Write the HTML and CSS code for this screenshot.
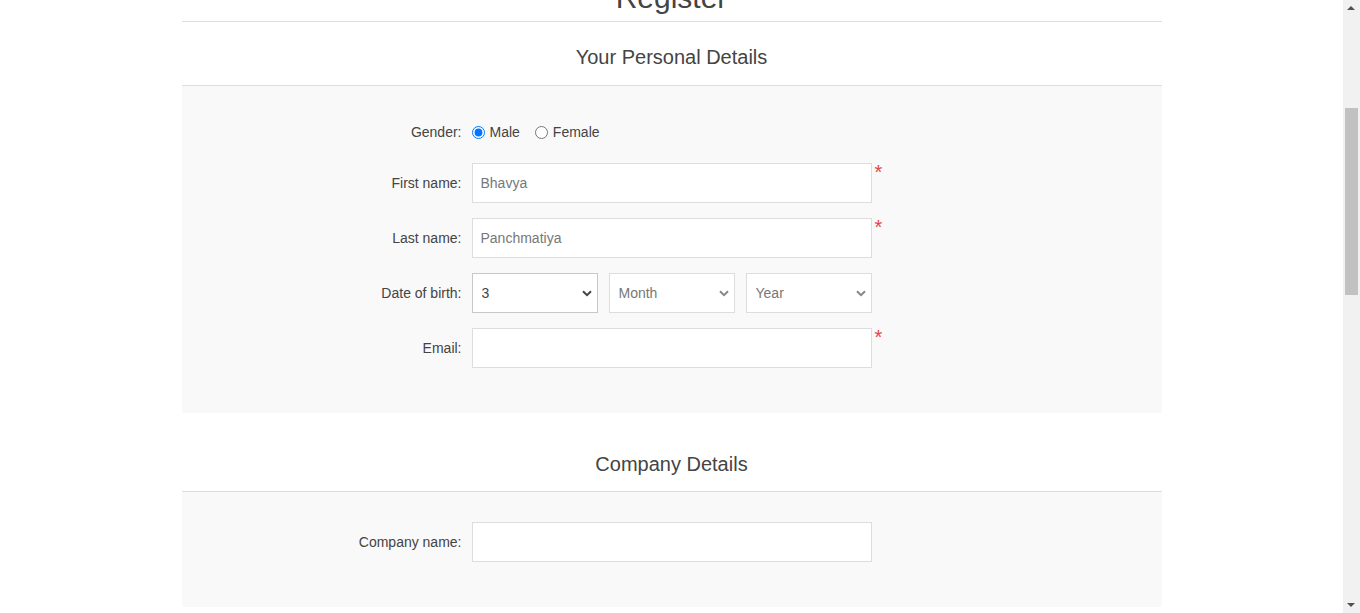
FILE: index.html
```html
<!DOCTYPE html>
<html lang="en">
<head>
    <meta charset="UTF-8">
    <meta name="viewport" content="width=device-width, initial-scale=1.0">
    <title>Register</title>
    <link rel="stylesheet" href="styles.css">
</head>
<body>
    <div class="master-wrapper">
        <div class="page-title">
            <h1>Register</h1>
        </div>

        <form class="page-body">
            <div class="fieldset">
                <div class="title">Your Personal Details</div>
                <div class="form-fields">
                    <div class="inputs gender-row">
                        <label>Gender:</label>
                        <div class="gender">
                            <span class="gender-option">
                                <input type="radio" id="gender-male" name="gender" value="M" checked>
                                <label for="gender-male">Male</label>
                            </span>
                            <span class="gender-option">
                                <input type="radio" id="gender-female" name="gender" value="F">
                                <label for="gender-female">Female</label>
                            </span>
                        </div>
                    </div>

                    <div class="inputs">
                        <label for="first-name">First name:</label>
                        <input type="text" id="first-name" class="text-box" value="Bhavya">
                        <span class="required">*</span>
                    </div>

                    <div class="inputs">
                        <label for="last-name">Last name:</label>
                        <input type="text" id="last-name" class="text-box" value="Panchmatiya">
                        <span class="required">*</span>
                    </div>

                    <div class="inputs">
                        <label>Date of birth:</label>
                        <div class="date-picker">
                            <select class="selected">
                                <option>Day</option>
                                <option>1</option>
                                <option>2</option>
                                <option selected>3</option>
                                <option>4</option>
                            </select>
                            <select>
                                <option>Month</option>
                                <option>January</option>
                                <option>February</option>
                                <option>March</option>
                            </select>
                            <select>
                                <option>Year</option>
                                <option>2000</option>
                                <option>2001</option>
                                <option>2002</option>
                            </select>
                        </div>
                    </div>

                    <div class="inputs">
                        <label for="email">Email:</label>
                        <input type="email" id="email" class="text-box">
                        <span class="required">*</span>
                    </div>
                </div>
            </div>

            <div class="fieldset">
                <div class="title">Company Details</div>
                <div class="form-fields">
                    <div class="inputs">
                        <label for="company">Company name:</label>
                        <input type="text" id="company" class="text-box">
                    </div>
                </div>
            </div>

            <div class="fieldset">
                <div class="title">Options</div>
                <div class="form-fields">
                    <div class="inputs">
                        <label for="newsletter">Newsletter:</label>
                        <div><input type="checkbox" id="newsletter" checked></div>
                    </div>
                </div>
            </div>

            <div class="fieldset">
                <div class="title">Your Password</div>
                <div class="form-fields">
                    <div class="inputs">
                        <label for="password">Password:</label>
                        <input type="password" id="password" class="text-box">
                        <span class="required">*</span>
                    </div>
                    <div class="inputs">
                        <label for="confirm-password">Confirm password:</label>
                        <input type="password" id="confirm-password" class="text-box">
                        <span class="required">*</span>
                    </div>
                </div>
            </div>

            <div class="buttons">
                <button type="button" class="register-button">Register</button>
            </div>
        </form>
    </div>

    <!-- window scrollbar, drawn since the capture hides the real one -->
    <div class="scrollbar" aria-hidden="true">
        <span class="scroll-arrow up"></span>
        <span class="scroll-thumb"></span>
        <span class="scroll-arrow down"></span>
    </div>
</body>
</html>
```

FILE: styles.css
```css
body {
    margin: 0;
    padding: 0 17px 0 0;
    font-family: "Liberation Sans", Arial, sans-serif;
    color: #444;
    background-color: #fff;
}

/* page is shown scrolled a little, title partly out of view */
.master-wrapper {
    width: 980px;
    margin: -19px auto 0;
}

.page-title {
    padding: 0 10px 6px;
    margin-bottom: 24px;
    border-bottom: 1px solid #ddd;
    text-align: center;
}

.page-title h1 {
    margin: 0;
    font-size: 30px;
    line-height: 34px;
    font-weight: normal;
}

.fieldset {
    margin-bottom: 40px;
}

.fieldset .title {
    padding: 0 10px 16px;
    border-bottom: 1px solid #ddd;
    text-align: center;
    font-size: 20px;
    line-height: 23px;
}

.fieldset + .fieldset .title {
    padding-bottom: 15px;
}

.form-fields {
    padding: 30px 15px;
    background-color: #f9f9f9;
}

.inputs {
    display: grid;
    grid-template-columns: 1fr 400px 1fr;
    align-items: center;
    margin-bottom: 15px;
    font-size: 14px;
}

.inputs > label {
    padding-right: 10px;
    text-align: right;
}

.gender-row {
    min-height: 32px;
}

.gender {
    display: flex;
    align-items: center;
}

.gender-option {
    display: flex;
    align-items: center;
    margin-right: 15px;
}

.gender-option input {
    margin: 0 5px 0 0;
    width: 13px;
    height: 13px;
}

.text-box {
    box-sizing: border-box;
    height: 40px;
    padding: 0 8px;
    border: 1px solid #ddd;
    background-color: #fff;
    font-family: "Liberation Sans", Arial, sans-serif;
    font-size: 14px;
    color: #777;
    outline: none;
}

.required {
    align-self: start;
    padding-left: 3px;
    font-size: 20px;
    line-height: 18px;
    color: #e4434b;
}

.date-picker {
    display: flex;
    gap: 11px;
}

.date-picker select {
    flex: 1;
    min-width: 0;
    height: 40px;
    padding: 0 20px 0 9px;
    border: 1px solid #ddd;
    border-radius: 0;
    appearance: none;
    background: #fff url("data:image/svg+xml,%3Csvg xmlns='http://www.w3.org/2000/svg' width='10' height='7'%3E%3Cpath d='M1 1.2l4 4 4-4' fill='none' stroke='%23888' stroke-width='2'/%3E%3C/svg%3E") no-repeat right 5px center;
    font-family: "Liberation Sans", Arial, sans-serif;
    font-size: 14px;
    color: #777;
}

.date-picker select.selected {
    border-color: #c8c8c8;
    color: #444;
    background-image: url("data:image/svg+xml,%3Csvg xmlns='http://www.w3.org/2000/svg' width='10' height='7'%3E%3Cpath d='M1 1.2l4 4 4-4' fill='none' stroke='%23444' stroke-width='2'/%3E%3C/svg%3E");
}

.buttons {
    margin-bottom: 40px;
    text-align: center;
}

.register-button {
    min-width: 140px;
    padding: 0 25px;
    height: 40px;
    border: none;
    background-color: #4ab2f1;
    color: #fff;
    font-size: 15px;
    text-transform: uppercase;
}

.scrollbar {
    position: fixed;
    top: 0;
    right: 0;
    bottom: 0;
    width: 17px;
    background-color: #f1f1f1;
}

.scroll-thumb {
    position: absolute;
    top: 108px;
    left: 2px;
    width: 13px;
    height: 187px;
    background-color: #c1c1c1;
}

.scroll-arrow {
    position: absolute;
    left: 4px;
    width: 0;
    height: 0;
    border-left: 4px solid transparent;
    border-right: 4px solid transparent;
}

.scroll-arrow.up {
    top: 6px;
    border-bottom: 4px solid #505050;
}

.scroll-arrow.down {
    bottom: 6px;
    border-top: 4px solid #505050;
}
```
